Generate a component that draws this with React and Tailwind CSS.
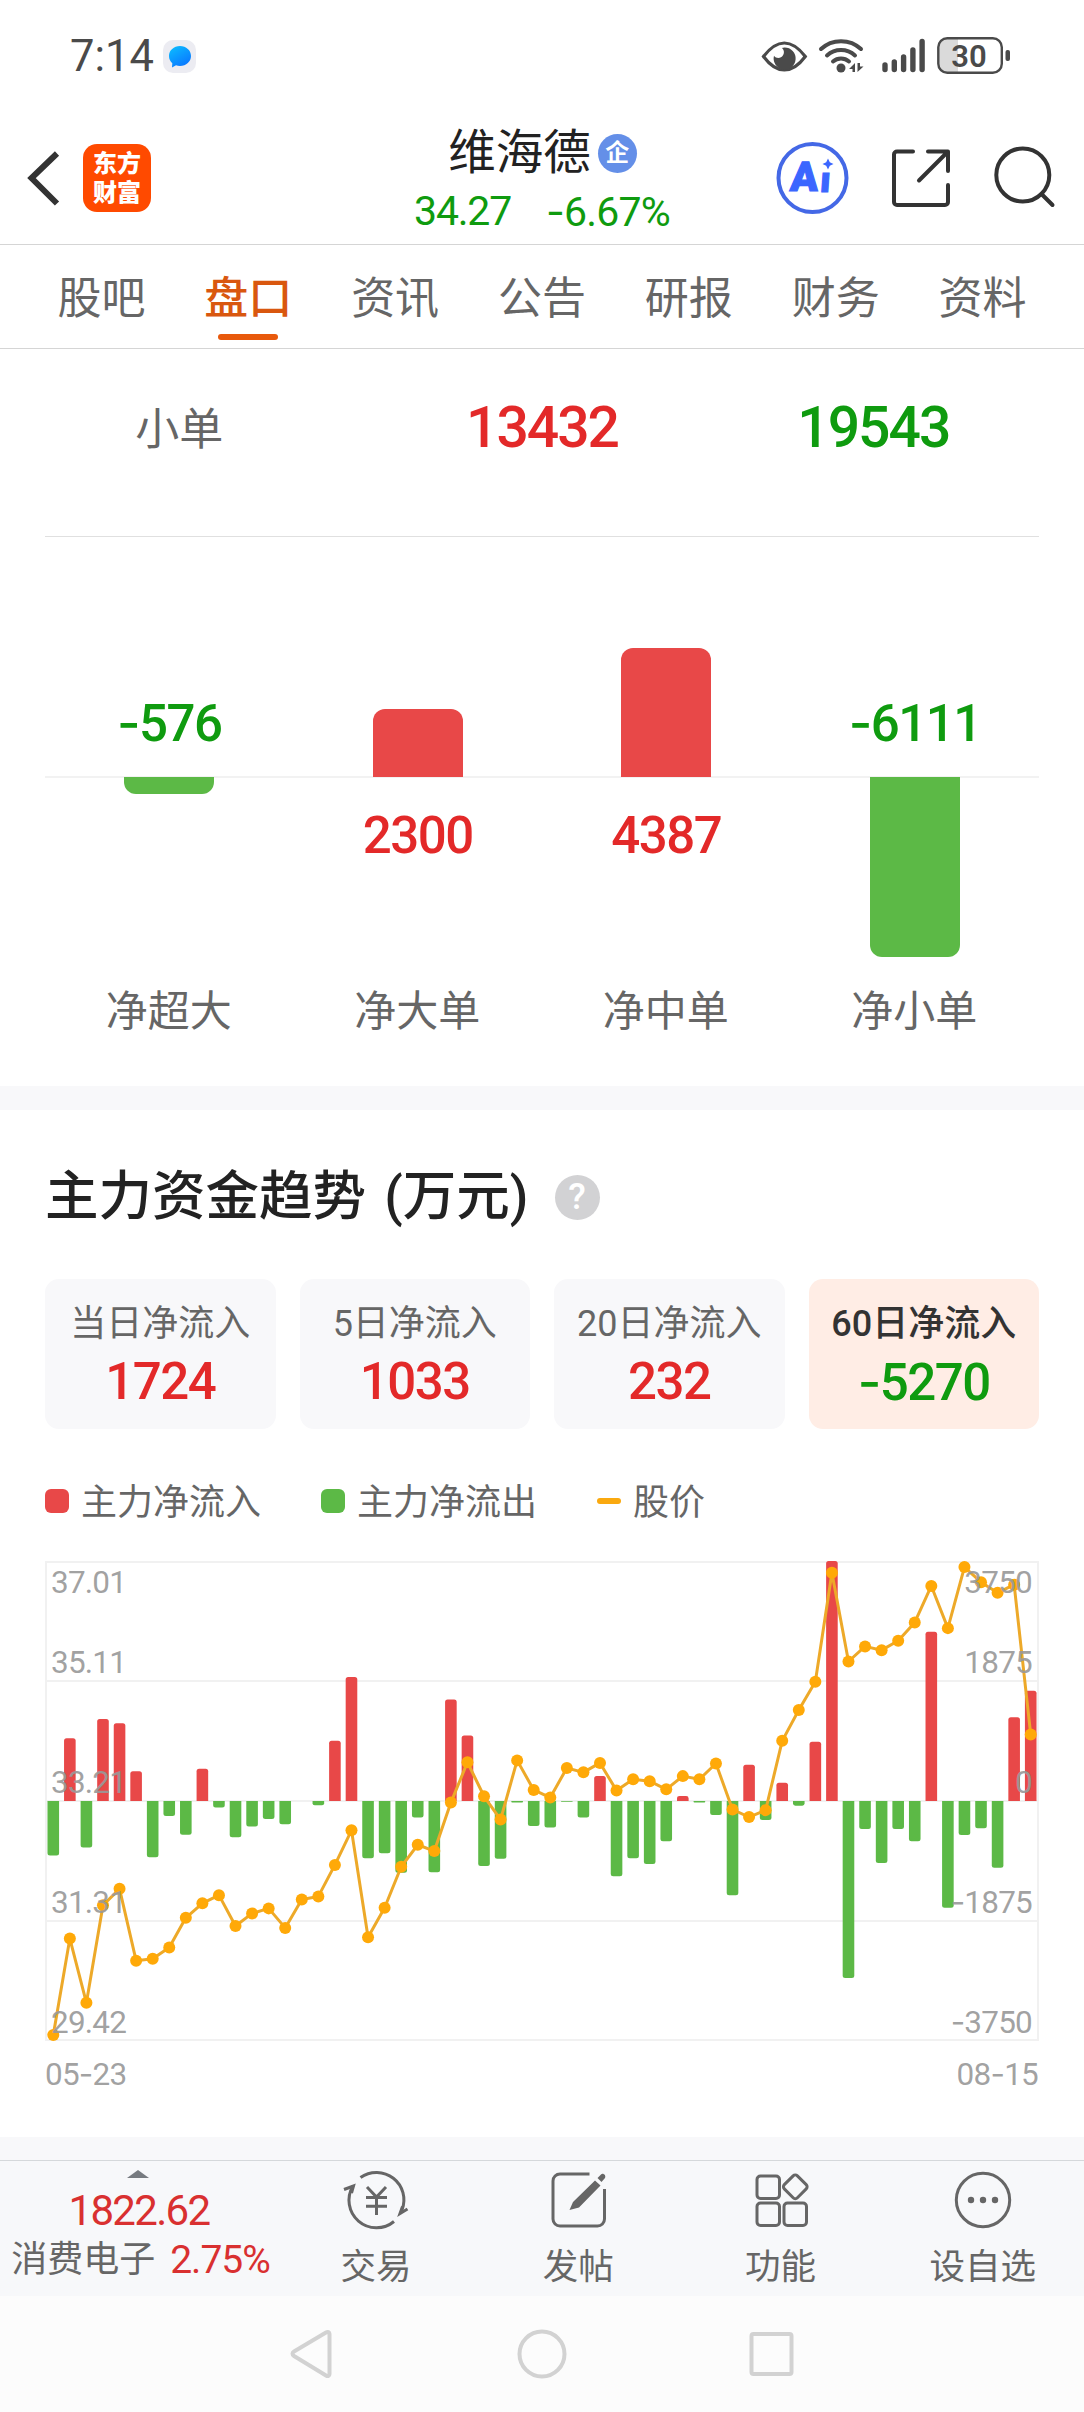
import { Fragment } from "react";

const tabs = ["股吧", "盘口", "资讯", "公告", "研报", "财务", "资料"];

const orders = [
  { name: "净超大", value: -576 },
  { name: "净大单", value: 2300 },
  { name: "净中单", value: 4387 },
  { name: "净小单", value: -6111 },
];

const periods = [
  { name: "当日净流入", value: 1724 },
  { name: "5日净流入", value: 1033 },
  { name: "20日净流入", value: 232 },
  { name: "60日净流入", value: -5270, active: true },
];

const flows = [
  -851, 980, -728, 1282, 1215, 465, -879, -235, -526, 504, -101, -566, -398,
  -280, -364, 0, -67, 941, 1938, -896, -815, -1120, -258, -1114, 1585, 1025,
  -1014, -902, -22, -392, -414, -11, -258, 392, -1176, -896, -986, -627, 78,
  -22, -218, -1473, 566, -297, 286, -73, 924, 3750, -2766, -437, -969, -437,
  -627, 2643, -1669, -532, -426, -1042, 1310, 1724,
];

const prices = [
  29.5, 31.03, 30.01, 31.56, 31.82, 30.68, 30.71, 30.89, 31.36, 31.59, 31.72,
  31.23, 31.43, 31.51, 31.2, 31.65, 31.7, 32.2, 32.75, 31.05, 31.52, 32.17,
  32.52, 32.42, 33.19, 33.83, 33.29, 32.92, 33.86, 33.39, 33.27, 33.74, 33.67,
  33.82, 33.38, 33.56, 33.53, 33.4, 33.61, 33.56, 33.81, 33.08, 32.96, 33.07,
  34.17, 34.66, 35.11, 36.84, 35.43, 35.67, 35.61, 35.76, 36.05, 36.63, 35.96,
  36.93, 36.69, 36.52, 36.65, 34.27,
];

const axisLabels = [
  { y: 32, price: "37.01", flow: "3750" },
  { y: 112, price: "35.11", flow: "1875" },
  { y: 232, price: "33.21", flow: "0" },
  { y: 352, price: "31.31", flow: "-1875" },
  { y: 472, price: "29.42", flow: "-3750" },
];

// Roboto's hyphen is too short for a minus sign, Inter's is wider
function Num({ children }) {
  const parts = String(children).split("-");
  return parts.map((part, i) => (
    <Fragment key={i}>
      {i > 0 && <span className="font-['Inter',sans-serif]">-</span>}
      {part}
    </Fragment>
  ));
}

function StatusBar() {
  return (
    <div className="h-28 shrink-0 pl-[70px] pr-[73px] flex items-start justify-between text-[#4a4a4a]">
      <div className="flex items-center pt-[38px]">
        <span className="text-[43.5px] leading-[38px]">7:14</span>
        <svg className="ml-[9px]" width="34" height="34" viewBox="0 0 34 34">
          <defs>
            <linearGradient id="bubble" x1="0" y1="0" x2="0.6" y2="1">
              <stop offset="0" stopColor="#0cc0ff" />
              <stop offset="1" stopColor="#0a78ff" />
            </linearGradient>
          </defs>
          <rect width="33" height="33" rx="10" fill="#ececf2" />
          <path
            d="M17 6c6.200 0 11 4.400 11 10s-4.800 10-11 10c-1.500 0-2.800-.2-4-.7L9 27.500l.3-4.200C7.200 21.500 6 19 6 16 6 10.400 10.800 6 17 6z"
            fill="url(#bubble)"
          />
        </svg>
      </div>
      <svg width="250" height="40" viewBox="761 36 250 40" className="mt-9" fill="none">
        <path
          d="M763.500 56.500C770 48 777 43 784.300 43s14.500 5 21 13.500C799 65 791.500 70 784.300 70s-14.500-5-20.800-13.500z"
          stroke="#4a4a4a"
          strokeWidth="3.200"
        />
        <path d="M784.500 47.500a11 11 0 1 1-10.500 8.200c2 3 7 3 9-.4 1.800-3 .8-6-1.200-7.400z" fill="#4a4a4a" />
        <g stroke="#4a4a4a" strokeWidth="4" strokeLinecap="round">
          <path d="M821 49c11-10.500 29-10.500 40 0" />
          <path d="M827 55.500c8-7.300 20-7.300 28 0" />
          <path d="M833 61.500c4.600-4 11.400-4 16 0" />
        </g>
        <circle cx="841" cy="68" r="4.500" fill="#4a4a4a" />
        <path d="M855 63v9h-2.500v-3H849zM857.500 72v-9h2.500v3.500h3.500z" fill="#4a4a4a" />
        <g stroke="#4a4a4a" strokeWidth="5.400" strokeLinecap="round">
          <path d="M885 65v4.500M894.300 62v7.500M903.600 57v12.500M912.900 50v19.500M922.100 41.500v28" />
        </g>
        <path d="M948 39h10v34h-10a9 9 0 0 1-9-9V48a9 9 0 0 1 9-9z" fill="#dadada" />
        <rect x="938.300" y="38.200" width="63.500" height="34.500" rx="9" stroke="#4a4a4a" strokeWidth="2.400" />
        <rect x="1005.500" y="50" width="4.500" height="11" rx="2" fill="#4a4a4a" />
        <text
          x="969"
          y="66.800"
          textAnchor="middle"
          fill="#4a4a4a"
          className="text-[31px] font-semibold"
        >
          30
        </text>
      </svg>
    </div>
  );
}

function Header() {
  return (
    <div className="h-[133px] shrink-0 border-b border-[#d5d5d5] pl-[26px] pr-[28px] grid grid-cols-[1fr_auto_1fr] items-start">
      <div className="flex items-center pt-8">
        <svg width="34" height="58" viewBox="0 0 34 58" fill="none">
          <path d="M31 4.500L5.500 29 31 54.500" stroke="#333" strokeWidth="6" />
        </svg>
        <div className="ml-[23px] w-[68px] h-[68px] rounded-[14px] bg-[#ff4a00] px-[10px] pt-[3px] text-white font-black text-[24px] leading-[29px] break-all font-['Noto_Sans_CJK_SC',sans-serif]">
          东方财富
        </div>
      </div>

      <div className="flex flex-col items-center pt-[18px]">
        <div className="flex items-center gap-[7px] pl-[3px]">
          <span className="text-[47.500px] leading-[47px] text-[#222]">维海德</span>
          <span className="w-[39px] h-[39px] rounded-full bg-[#648fe8] text-white text-[24px] leading-[39px] text-center font-bold">
            企
          </span>
        </div>
        <div className="mt-[14px] text-[41px] leading-[40px] text-[#0f9b0f] tracking-[-0.03em] flex gap-[35px] pl-[2px]">
          <span>34.27</span>
          <span className="tracking-[-0.02em]"><Num>-6.67%</Num></span>
        </div>
      </div>

      <svg className="justify-self-end mt-7" width="282" height="76" viewBox="774 140 282 76" fill="none">
        <circle cx="812.500" cy="178" r="34" stroke="#4468e6" strokeWidth="4" />
        <text
          transform="translate(789.500 191) skewX(-4)"
          fill="#3b66ff"
          stroke="#3b66ff"
          strokeWidth="1.200"
          className="text-[41px] font-black"
        >
          A
          <tspan x="30" y="1" className="text-[36px]">ı</tspan>
        </text>
        <path d="M828 158.500l1.800 3.700 3.700 1.800-3.700 1.800-1.800 3.700-1.800-3.700-3.700-1.800 3.700-1.800z" fill="#3b66ff" />
        <g stroke="#333" strokeWidth="4" strokeLinecap="round" strokeLinejoin="round">
          <path d="M913 151.500h-16a3 3 0 0 0-3 3V202a3 3 0 0 0 3 3h48a3 3 0 0 0 3-3v-17" />
          <path d="M928 151.500h20V171M947 152.500L919 180.500" />
          <circle cx="1022.800" cy="175" r="26.500" />
          <path d="M1041.500 194l11 11" />
        </g>
      </svg>
    </div>
  );
}

function Tabs() {
  return (
    <div className="h-[104px] shrink-0 px-[28px] border-b border-[#d5d5d5] grid grid-cols-7">
      {tabs.map((tab) => {
        const active = tab === "盘口";
        return (
          <div
            key={tab}
            className={`flex flex-col items-center pt-8 text-[44px] leading-[44px] ${
              active ? "text-[#d9570f] font-medium" : "text-[#666]"
            }`}
          >
            {tab}
            {active && <div className="mt-[13px] w-[60px] h-1.5 rounded-full bg-[#e8590c]" />}
          </div>
        );
      })}
    </div>
  );
}

function OrderSection() {
  return (
    <div className="h-[737px] shrink-0 px-[45px]">
      <div className="h-[188px] border-b border-[#e0e0e0] grid grid-cols-3 text-center leading-[60px] pt-[49px]">
        <span className="text-[44px] text-[#666] pr-[63px] pt-[2px]">小单</span>
        <span className="text-[57px] font-medium tracking-[-0.035em] text-[#e32929]">13432</span>
        <span className="text-[57px] font-medium tracking-[-0.035em] text-[#0f9b0f]">19543</span>
      </div>

      <div className="grid grid-cols-4 pt-[80px]">
        {orders.map(({ name, value }) => {
          const height = (Math.abs(value) / 6111) * 180;
          const up = value > 0;
          return (
            <div key={name} className="flex flex-col items-center">
              <div className="h-[161px] w-full flex flex-col items-center justify-end border-b-2 border-[#f2f2f2]">
                {up ? (
                  <div className="w-[90px] rounded-t-[12px] bg-[#e84848] -mb-px" style={{ height }} />
                ) : (
                  <span className="text-[51px] leading-[50px] font-medium tracking-[-0.03em] text-[#0f9b0f] mb-[27px]">
                    <Num>{value}</Num>
                  </span>
                )}
              </div>
              <div className="h-[209px] flex flex-col items-center">
                {up ? (
                  <span className="text-[51px] leading-[50px] font-medium tracking-[-0.03em] text-[#e32929] mt-[33px]">
                    {value}
                  </span>
                ) : (
                  <div className="w-[90px] rounded-b-[12px] bg-[#5cb946] -mt-px" style={{ height }} />
                )}
              </div>
              <span className="text-[42px] leading-[50px] text-[#666] pr-px">{name}</span>
            </div>
          );
        })}
      </div>
    </div>
  );
}

function FlowChart() {
  const step = 994 / 60;
  const x = (i) => step * (i + 0.5);
  const y = (price) => 1 + ((37.01 - price) / 7.59) * 478;

  return (
    <svg width="994" height="545" viewBox="0 0 994 545" fill="none" className="block overflow-visible">
      <g stroke="#f1f1f1" strokeWidth="2">
        <rect x="1" y="1" width="992" height="478" />
        <path d="M0 120h994M0 240h994M0 360h994" />
      </g>

      {flows.map((flow, i) => {
        const h = (Math.abs(flow) / 3750) * 240;
        const r = Math.min(2.5, h / 2);
        const dir = flow > 0 ? -1 : 1;
        const left = x(i) - 5.8;
        return (
          <path
            key={i}
            d={`M${left} 240v${dir * (h - r)}q0 ${dir * r} ${r} ${dir * r}h${11.6 - 2 * r}q${r} 0 ${r} ${-dir * r}v${-dir * (h - r)}z`}
            fill={flow > 0 ? "#e84848" : "#5cb946"}
          />
        );
      })}

      <polyline
        points={prices.map((p, i) => `${x(i)},${y(p)}`).join(" ")}
        stroke="#eda929"
        strokeWidth="3"
        strokeLinejoin="round"
      />
      {prices.map((p, i) => (
        <circle key={i} cx={x(i)} cy={y(p)} r="6" fill="#ffa908" />
      ))}

      <g fill="#999" fillOpacity="0.92" className="text-[31.5px] tracking-[-0.025em]">
        {axisLabels.map((label) => (
          <Fragment key={label.price}>
            <text x="6" y={label.y}>{label.price}</text>
            <text x="987" y={label.y} textAnchor="end">
              {label.flow.startsWith("-") && <tspan className="font-['Inter',sans-serif]">-</tspan>}
              {label.flow.replace("-", "")}
            </text>
          </Fragment>
        ))}
        <text x="0" y="524">
          05<tspan className="font-['Inter',sans-serif]">-</tspan>23
        </text>
        <text x="993" y="524" textAnchor="end">
          08<tspan className="font-['Inter',sans-serif]">-</tspan>15
        </text>
      </g>
    </svg>
  );
}

function TrendSection() {
  return (
    <div className="h-[1027px] shrink-0 px-[45px] pt-[57px]">
      <div className="flex items-center h-[60px]">
        <h2 className="text-[53.500px] leading-[60px] font-medium text-[#222] [word-spacing:5px]">
          主力资金趋势 (万元)
        </h2>
        <span className="ml-[26px] w-[45px] h-[45px] rounded-full bg-[#d2d2d4] text-white text-[36px] leading-[45px] font-medium text-center">
          ?
        </span>
      </div>

      <div className="mt-[52px] grid grid-cols-4 gap-6">
        {periods.map(({ name, value, active }) => (
          <div
            key={name}
            className={`h-[150px] rounded-[14px] flex flex-col items-center pt-[25px] whitespace-nowrap ${
              active ? "bg-[#ffede5]" : "bg-[#f8f8fa]"
            }`}
          >
            <span className={`text-[36px] leading-[40px] ${active ? "text-[#333] font-medium" : "text-[#666]"}`}>
              {name}
            </span>
            <span
              className={`mt-[13px] text-[51px] leading-[50px] font-medium tracking-[-0.03em] ${
                value > 0 ? "text-[#e32929]" : "text-[#0f9b0f]"
              }`}
            >
              <Num>{value}</Num>
            </span>
          </div>
        ))}
      </div>

      <div className="mt-[52px] h-10 flex items-center text-[36px] leading-[40px] text-[#666]">
        <span className="w-6 h-6 rounded-md bg-[#e84848] mr-3" />
        <span className="pt-[3px]">主力净流入</span>
        <span className="w-6 h-6 rounded-md bg-[#5cb946] ml-[60px] mr-3" />
        <span className="pt-[3px]">主力净流出</span>
        <span className="w-6 h-1.5 rounded-full bg-[#faa90f] ml-[60px] mr-3" />
        <span className="pt-[3px]">股价</span>
      </div>

      <div className="mt-10">
        <FlowChart />
      </div>
    </div>
  );
}

const actions = [
  {
    name: "交易",
    icon: (
      <>
        <path d="M16.500 8.500A27.500 27.500 0 0 1 58 41M50 52.500A27.500 27.500 0 0 1 9 17" />
        <path d="M0 20.500l9.500-3.500-2 7M63.500 40l-7.500 4.500 2.500-7" />
        <path d="M23 18l9.500 10 9.500-10M22 28.500h21M22 37.300h21M32.500 28v18" />
      </>
    ),
  },
  {
    name: "发帖",
    icon: (
      <>
        <path d="M43.500 5H14a7 7 0 0 0-7 7V50a7 7 0 0 0 7 7h37.500a7 7 0 0 0 7-7V20" />
        <path d="M49 11.500l5.500 5L33 38.500l-9.500 2.500 3.500-8zM51.500 9l3.500-3.500c2-2 5.500 1 4 3.500l-3.500 4z" fill="#666" stroke="none" />
      </>
    ),
  },
  {
    name: "功能",
    icon: (
      <>
        <rect x="8" y="7" width="22.500" height="22.500" rx="3.500" />
        <rect x="8" y="34" width="22.500" height="22.500" rx="3.500" />
        <rect x="35" y="34" width="22.500" height="22.500" rx="3.500" />
        <rect x="37" y="8.500" width="18.500" height="18.500" rx="3" transform="rotate(45 46.200 17.800)" />
      </>
    ),
  },
  {
    name: "设自选",
    icon: (
      <>
        <circle cx="32" cy="31" r="26.700" />
        <g fill="#666" stroke="none">
          <circle cx="20" cy="31" r="3.200" />
          <circle cx="32" cy="31" r="3.200" />
          <circle cx="44" cy="31" r="3.200" />
        </g>
      </>
    ),
  },
];

function BottomBar() {
  return (
    <div className="h-[136px] shrink-0 border-t border-[#d5d8db] bg-[#f7f8fa] flex text-[#666]">
      <div className="w-[275px] shrink-0 flex flex-col items-center pt-[9px] pl-[3px] whitespace-nowrap">
        <svg width="22" height="8" viewBox="0 0 22 8" className="mr-[2px]">
          <path d="M11 0l11 8H0z" fill="#777b80" />
        </svg>
        <span className="mt-[11px] text-[42px] leading-[44px] tracking-[-0.04em] text-[#d93030]">1822.62</span>
        <div className="mt-[7px] pl-[3px] flex items-center leading-[40px]">
          <span className="text-[36px]">消费电子</span>
          <span className="ml-[15px] text-[39px] tracking-[-0.025em] text-[#d93030]">2.75%</span>
        </div>
      </div>
      {actions.map(({ name, icon }) => (
        <div key={name} className="flex-1 flex flex-col items-center pt-2">
          <svg width="64" height="62" viewBox="0 0 64 62" fill="none" stroke="#666" strokeWidth="3" className="overflow-visible">
            {icon}
          </svg>
          <span className="mt-4 text-[35.500px] leading-[40px]">{name}</span>
        </div>
      ))}
    </div>
  );
}

function SystemNav() {
  return (
    <div className="h-[116px] shrink-0 bg-[#fcfcfc] flex justify-center pt-[33px]">
      <svg width="506" height="50" viewBox="289 2329 506 50" fill="none" stroke="#d2d2d2" strokeWidth="4">
        <path d="M326 2332.500L294 2351.500c-2 1.200-2 3.200 0 4.500L326 2375.500c2 1.200 3.500.5 3.500-1.500V2334c0-2-1.500-2.700-3.500-1.500z" />
        <circle cx="542" cy="2354" r="22.500" />
        <rect x="751.500" y="2334" width="40" height="40" rx="2" />
      </svg>
    </div>
  );
}

export default function App() {
  return (
    <div className="w-[1084px] h-[2412px] overflow-hidden bg-white flex flex-col font-['Roboto','Noto_Sans_CJK_SC',sans-serif]">
      <StatusBar />
      <Header />
      <Tabs />
      <OrderSection />
      <div className="h-6 shrink-0 bg-[#f8f8fa]" />
      <TrendSection />
      <div className="h-[23px] shrink-0 bg-[#f8f8fa]" />
      <BottomBar />
      <SystemNav />
    </div>
  );
}
